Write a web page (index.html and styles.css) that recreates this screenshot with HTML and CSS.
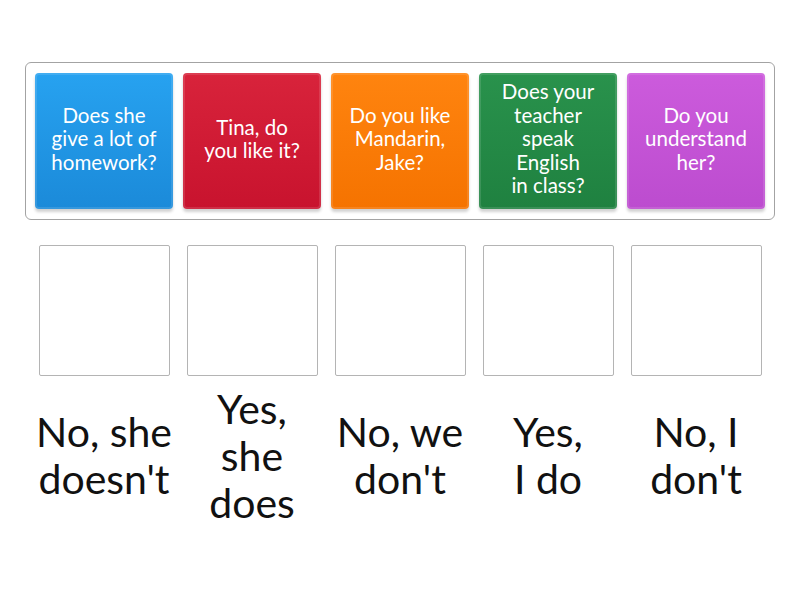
FILE: index.html
```html
<!DOCTYPE html>
<html lang="en">
<head>
  <meta charset="UTF-8">
  <title>Match up</title>
  <link rel="stylesheet" href="styles.css">
</head>
<body>

<div class="board">
  <div class="cards">
    <div class="card blue">Does she<br>give a lot of<br>homework?</div>
    <div class="card red">Tina, do<br>you like it?</div>
    <div class="card orange">Do you like<br>Mandarin,<br>Jake?</div>
    <div class="card green">Does your<br>teacher<br>speak<br>English<br>in class?</div>
    <div class="card purple">Do you<br>understand<br>her?</div>
  </div>
</div>

<div class="targets">
  <div class="slot">
    <div class="drop"></div>
    <div class="answer">No, she<br>doesn't</div>
  </div>
  <div class="slot">
    <div class="drop"></div>
    <div class="answer">Yes,<br>she<br>does</div>
  </div>
  <div class="slot">
    <div class="drop"></div>
    <div class="answer">No, we<br>don't</div>
  </div>
  <div class="slot">
    <div class="drop"></div>
    <div class="answer">Yes,<br>I do</div>
  </div>
  <div class="slot">
    <div class="drop"></div>
    <div class="answer">No, I<br>don't</div>
  </div>
</div>

</body>
</html>
```

FILE: styles.css
```css
body { margin: 0; background: #fff; font-family: Lato, "Open Sans", Arial, sans-serif; }

.board {
  margin: 62px 0 0 25px; width: 750px; box-sizing: border-box;
  border: 1px solid #a3a3a3; border-radius: 6px; padding: 10px 9px;
}
.cards { display: grid; grid-template-columns: repeat(5, 138px); gap: 10px; }
.card {
  height: 136px; box-sizing: border-box; padding-bottom: 4px; border-radius: 4px; color: #fff;
  display: flex; align-items: center; justify-content: center; text-align: center;
  font-size: 20.5px; line-height: 23.5px;
  box-shadow: inset 0 0 0 2px rgba(255,255,255,0.12), 0 3px 3px rgba(0,0,0,0.18);
}
.blue   { background: linear-gradient(#27a2f0, #1b8ad9); }
.red    { background: linear-gradient(#d8233b, #c8132e); }
.orange { background: linear-gradient(#ff840f, #f57300); }
.green  { background: linear-gradient(#29924c, #1f8140); }
.purple { background: linear-gradient(#cc5bdc, #bc4ccf); }

.targets {
  margin: 25px 0 0 35px; width: 730px;
  display: grid; grid-template-columns: repeat(5, 138px); gap: 10px;
}
.slot { display: flex; flex-direction: column; align-items: center; }
.drop {
  width: 131px; height: 131px; box-sizing: border-box;
  border: 1px solid #b4b4b4; border-radius: 2px;
}
.answer {
  height: 142px; margin-top: 8px; width: 160px;
  display: flex; align-items: center; justify-content: center; text-align: center;
  font-size: 41px; line-height: 47px; color: #111;
}
```
